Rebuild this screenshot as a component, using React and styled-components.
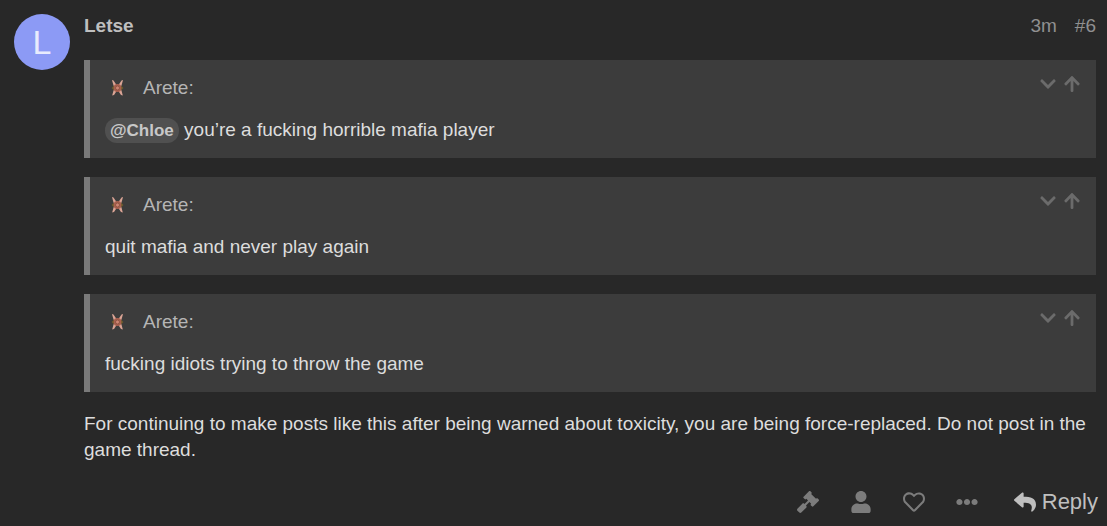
import React from "react";
import styled, { createGlobalStyle } from "styled-components";
import {
  FaArrowUp,
  FaChevronDown,
  FaEllipsisH,
  FaGavel,
  FaRegHeart,
  FaReply,
  FaUser,
} from "react-icons/fa";

const GlobalStyle = createGlobalStyle`
  html { background: #282828; }
  body {
    margin: 0;
    background: #282828;
    color: #dddddd;
    font-family: "Liberation Sans", Arial, sans-serif;
    font-size: 19px;
    line-height: 26px;
  }
  *, *::before, *::after { box-sizing: border-box; }
`;

const Post = styled.article`
  display: flex;
  align-items: flex-start;
  gap: 14px;
  padding: 13px 11px 8px 14px;
`;

const Avatar = styled.a`
  flex: none;
  display: flex;
  align-items: center;
  justify-content: center;
  width: 56px;
  height: 56px;
  margin-top: 1px;
  border-radius: 50%;
  background: #8c9af5;
  color: #e8ebfd;
  font-size: 34px;
  text-decoration: none;
`;

const Body = styled.div`
  flex: 1;
  min-width: 0;
`;

const Header = styled.header`
  display: flex;
  justify-content: space-between;
  margin-bottom: 21px;
`;

const UserName = styled.a`
  color: #bfbfbf;
  font-weight: bold;
  text-decoration: none;
`;

const Meta = styled.div`
  display: flex;
  gap: 18px;
`;

const MetaLink = styled.a`
  color: #909090;
  text-decoration: none;
`;

const Quote = styled.aside`
  margin-bottom: 19px;
  padding: 15px;
  border-left: 6px solid #7a7a7a;
  background: #3c3c3c;
`;

const QuoteTitle = styled.div`
  display: flex;
  align-items: center;
  gap: 14px;
  margin-bottom: 16px;
  color: #b5b5b5;
`;

const QuoteControls = styled.div`
  display: flex;
  align-self: flex-start;
  gap: 6px;
  margin-left: auto;
`;

const ControlButton = styled.button`
  display: flex;
  padding: 0;
  border: 0;
  background: none;
  color: #6b6b6b;
  font-size: 18px;
  cursor: pointer;
`;

const QuoteText = styled.blockquote`
  margin: 0;
`;

const Mention = styled.a`
  display: inline-block;
  padding: 0 5px;
  border-radius: 12px;
  background: #505050;
  color: #c8c8c8;
  font-size: 17px;
  font-weight: bold;
  line-height: 25px;
  text-decoration: none;
`;

const Paragraph = styled.p`
  margin: 0;
`;

const Actions = styled.nav`
  display: flex;
  align-items: center;
  justify-content: flex-end;
  gap: 31px;
  margin: 25px -2px 0 0;
`;

const ActionButton = styled.button`
  display: flex;
  align-items: center;
  gap: 6px;
  padding: 0;
  border: 0;
  background: none;
  color: ${(p) => (p.$bright ? "#bfbfbf" : "#7c7c7c")};
  font-family: inherit;
  font-size: 22px;
  line-height: 28px;
  cursor: pointer;
  margin-left: ${(p) => (p.$bright ? "5px" : "0")};
`;

function StarAvatar() {
  return (
    <svg width="24" height="24" viewBox="0 0 24 24" aria-hidden="true">
      <g fill="#dba596">
        <path d="M7 4 L8.5 4.5 L11.5 9 L8.8 10.5 Z" />
        <path d="M18 4 L16.5 4.5 L13.5 9 L16.2 10.5 Z" />
        <path d="M7.2 19.5 L9 19 L11.5 15.2 L8.8 13.6 Z" />
        <path d="M17.8 19.5 L16 19 L13.5 15.2 L16.2 13.6 Z" />
      </g>
      <path d="M6.5 12 L9 9.5 V14.5 Z M18.5 12 L16 9.5 V14.5 Z" fill="#6c5c2d" />
      <circle cx="12.5" cy="12" r="3.9" fill="#a85f4e" />
      <circle cx="12.5" cy="12" r="2" fill="#cf8573" stroke="#87503f" strokeWidth="0.8" />
    </svg>
  );
}

function QuoteCard({ author, children }) {
  return (
    <Quote>
      <QuoteTitle>
        <StarAvatar />
        <span>{author}:</span>
        <QuoteControls>
          <ControlButton type="button" aria-label="Expand quote">
            <FaChevronDown />
          </ControlButton>
          <ControlButton type="button" aria-label="Go to quoted post">
            <FaArrowUp />
          </ControlButton>
        </QuoteControls>
      </QuoteTitle>
      <QuoteText>{children}</QuoteText>
    </Quote>
  );
}

export default function App() {
  return (
    <>
      <GlobalStyle />
      <Post>
        <Avatar href="#letse">L</Avatar>
        <Body>
          <Header>
            <UserName href="#letse">Letse</UserName>
            <Meta>
              <MetaLink href="#date">3m</MetaLink>
              <MetaLink href="#post-6">#6</MetaLink>
            </Meta>
          </Header>
          <QuoteCard author="Arete">
            <Mention href="#chloe">@Chloe</Mention> you’re a fucking horrible mafia player
          </QuoteCard>
          <QuoteCard author="Arete">quit mafia and never play again</QuoteCard>
          <QuoteCard author="Arete">fucking idiots trying to throw the game</QuoteCard>
          <Paragraph>
            For continuing to make posts like this after being warned about toxicity, you are being
            force-replaced. Do not post in the game thread.
          </Paragraph>
          <Actions>
            <ActionButton type="button" aria-label="Vote"><FaGavel /></ActionButton>
            <ActionButton type="button" aria-label="User"><FaUser /></ActionButton>
            <ActionButton type="button" aria-label="Like"><FaRegHeart /></ActionButton>
            <ActionButton type="button" aria-label="More"><FaEllipsisH /></ActionButton>
            <ActionButton type="button" $bright><FaReply />Reply</ActionButton>
          </Actions>
        </Body>
      </Post>
    </>
  );
}
